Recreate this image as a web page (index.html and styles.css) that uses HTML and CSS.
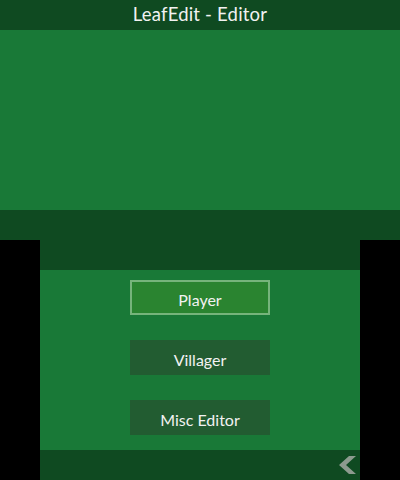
FILE: index.html
```html
<!DOCTYPE html>
<html>
<head>
<meta charset="utf-8">
<link rel="stylesheet" href="styles.css">
</head>
<body>
<div class="top-screen">
  <div class="bar top-header">LeafEdit - Editor</div>
  <div class="top-main"></div>
  <div class="bar top-footer"></div>
</div>
<div class="bottom-row">
  <div class="side"></div>
  <div class="bottom-screen">
    <div class="bar"></div>
    <div class="bottom-main">
      <div class="btn selected">Player</div>
      <div class="btn">Villager</div>
      <div class="btn">Misc Editor</div>
    </div>
    <div class="bar bottom-footer">
      <svg class="back" width="22" height="22" viewBox="0 0 22 22">
        <polygon points="14,2 21,2 11,11 21,20 14,20 4,11" fill="#8c9a8e"/>
      </svg>
    </div>
  </div>
  <div class="side"></div>
</div>
</body>
</html>
```
FILE: styles.css
```css
* { box-sizing: border-box; }
html, body { margin: 0; padding: 0; }
body {
  width: 400px;
  height: 480px;
  background: #000;
  font-family: Lato, "Noto Sans", sans-serif;
  color: #f2f2f2;
  overflow: hidden;
}
.top-screen {
  display: flex;
  flex-direction: column;
  height: 240px;
}
.bar {
  height: 30px;
  background: #0f4a21;
  flex: none;
}
.top-header {
  display: flex;
  align-items: center;
  justify-content: center;
  font-size: 18.5px;
  letter-spacing: 0.2px;
  padding-bottom: 3px;
}
.top-main {
  flex: 1;
  background: #197937;
}
.bottom-row {
  display: flex;
  height: 240px;
}
.side {
  width: 40px;
  background: #000;
}
.bottom-screen {
  width: 320px;
  display: flex;
  flex-direction: column;
}
.bottom-main {
  flex: 1;
  background: #197937;
  display: flex;
  flex-direction: column;
  align-items: center;
  padding-top: 10px;
  gap: 25px;
}
.btn {
  width: 140px;
  height: 35px;
  background: #225c31;
  display: flex;
  align-items: center;
  justify-content: center;
  font-size: 16px;
  padding-top: 3px;
}
.btn.selected {
  background: #2a8430;
  border: 2px solid #76b47b;
}
.bottom-footer {
  display: flex;
  justify-content: flex-end;
  align-items: center;
  padding-right: 3px;
}
.back { display: block; }
```
